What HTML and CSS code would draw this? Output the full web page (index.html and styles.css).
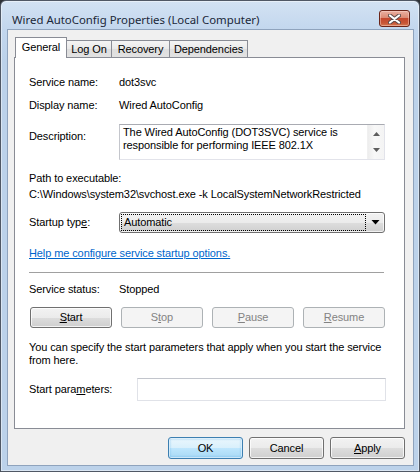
FILE: index.html
```html
<!DOCTYPE html>
<html>
<head>
<meta charset="utf-8">
<link rel="stylesheet" href="styles.css">
</head>
<body>
<div class="window">
  <div class="titlebar">
    <span class="title">Wired AutoConfig Properties (Local Computer)</span>
    <div class="close">
      <svg width="13" height="10" viewBox="0 0 13 10"><path d="M2 1.5 L11 8.5 M11 1.5 L2 8.5" stroke="#5b4a4a" stroke-width="4" stroke-linecap="round"/><path d="M2 1.5 L11 8.5 M11 1.5 L2 8.5" stroke="#ffffff" stroke-width="2.2" stroke-linecap="round"/></svg>
    </div>
  </div>
  <div class="client">
    <div class="tabs">
      <div class="tab active tab-general">General</div>
      <div class="tab tab-logon">Log On</div>
      <div class="tab tab-recovery">Recovery</div>
      <div class="tab tab-deps">Dependencies</div>
    </div>
    <div class="panel">
      <div class="row r1"><span class="label">Service name:</span><span class="value">dot3svc</span></div>
      <div class="row r2"><span class="label">Display name:</span><span class="value">Wired AutoConfig</span></div>
      <div class="row r3">
        <span class="label desc-label">Description:</span>
        <div class="desc">
          <div class="desc-text">The Wired AutoConfig (DOT3SVC) service is<br>responsible for performing IEEE 802.1X</div>
          <div class="vscroll">
            <svg width="7" height="4" viewBox="0 0 7 4"><path d="M3.5 0 L7 4 L0 4 Z" fill="#5e5e5e"/></svg>
            <svg width="7" height="4" viewBox="0 0 7 4"><path d="M0 0 L7 0 L3.5 4 Z" fill="#5e5e5e"/></svg>
          </div>
        </div>
      </div>
      <div class="line path-label">Path to executable:</div>
      <div class="line path-value">C:\Windows\system32\svchost.exe -k LocalSystemNetworkRestricted</div>
      <div class="row startup">
        <span class="label">Startup typ<u>e</u>:</span>
        <div class="combo">
          <span class="combo-focus">Automatic</span>
          <svg width="9" height="5" viewBox="0 0 9 5"><path d="M0.5 0 L8.5 0 L4.5 4.5 Z" fill="#000"/></svg>
        </div>
      </div>
      <div class="line link-line"><span class="link">Help me configure service startup options.</span></div>
      <div class="sep"></div>
      <div class="row status"><span class="label">Service status:</span><span class="value">Stopped</span></div>
      <div class="svc-buttons">
        <div class="btn"><u>S</u>tart</div>
        <div class="btn disabled">S<u>t</u>op</div>
        <div class="btn disabled"><u>P</u>ause</div>
        <div class="btn disabled"><u>R</u>esume</div>
      </div>
      <div class="para">You can specify the start parameters that apply when you start the service<br>from here.</div>
      <div class="row params">
        <span class="label params-label">Start para<u>m</u>eters:</span>
        <div class="input"></div>
      </div>
    </div>
    <div class="actions">
      <div class="btn dlg default">OK</div>
      <div class="btn dlg">Cancel</div>
      <div class="btn dlg"><u>A</u>pply</div>
    </div>
  </div>
</div>
</body>
</html>
```
FILE: styles.css
```css
html, body {
  margin: 0;
  padding: 0;
  background: #2e3136;
}
body {
  width: 420px;
  height: 472px;
  overflow: hidden;
  font-family: "Liberation Sans", Arial, sans-serif;
  font-size: 11px;
  letter-spacing: -0.1px;
  color: #000;
}
u { text-decoration: underline; text-underline-offset: 1px; }

.window {
  box-sizing: border-box;
  width: 420px;
  height: 472px;
  border: 1px solid #505865;
  border-radius: 6px 6px 0 0;
  background: linear-gradient(#d3e2f3 0px, #c3d7ee 28px, #bcd2ea 60px, #bcd2ea 100%);
  box-shadow: inset 0 0 0 1px rgba(255,255,255,0.45);
  display: flex;
  flex-direction: column;
}

.titlebar {
  height: 28px;
  display: flex;
  align-items: flex-start;
  padding-left: 11px;
  flex: none;
}
.title {
  font-family: "Noto Sans", "Open Sans", sans-serif;
  font-size: 11.4px;
  letter-spacing: 0;
  line-height: 16px;
  margin-top: 11px;
  color: #1b2738;
  flex: 1;
  white-space: nowrap;
}
.close {
  box-sizing: border-box;
  width: 31px;
  height: 17px;
  margin-top: 9px;
  margin-right: 9px;
  border: 1px solid #6b2418;
  border-radius: 3px;
  background: linear-gradient(#eab0a2 0%, #dc8a74 45%, #c5482e 50%, #c75535 80%, #d77a52 100%);
  box-shadow: inset 0 0 0 1px rgba(255,220,210,0.45);
  display: flex;
  align-items: center;
  justify-content: center;
}

.client {
  box-sizing: border-box;
  flex: 1;
  margin: 0 5px 5px 6px;
  border: 1px solid #8fa3bd;
  background: #f0f0f0;
  padding: 7px 8px 0 6px;
  display: flex;
  flex-direction: column;
}

.tabs {
  display: flex;
  align-items: flex-end;
  height: 20px;
  padding-left: 1px;
  flex: none;
}
.tab {
  box-sizing: border-box;
  height: 17px;
  border: 1px solid #898c95;
  border-bottom: none;
  border-left: none;
  background: linear-gradient(#f4f4f4, #e9e9e9 50%, #dedede 51%, #e2e2e2);
  text-align: center;
  line-height: 16px;
}
.tab.active {
  height: 21px;
  margin-bottom: -1px;
  background: #fff;
  border-left: 1px solid #898c95;
  position: relative;
  z-index: 1;
  line-height: 18px;
}
.tab-general { width: 52px; }
.tab-logon { width: 45px; }
.tab-recovery { width: 58px; }
.tab-deps { width: 78px; }

.panel {
  box-sizing: border-box;
  height: 372px;
  flex: none;
  border: 1px solid #898c95;
  background: #fff;
  padding: 18px 19px 0 14px;
  display: flex;
  flex-direction: column;
}

.row {
  display: flex;
  align-items: flex-start;
  line-height: 13px;
}
.label {
  width: 90px;
  flex: none;
  white-space: nowrap;
}
.value { white-space: nowrap; }
.line { line-height: 13px; white-space: nowrap; }

.r2 { margin-top: 10px; }
.r3 { margin-top: 12px; }
.desc-label { margin-top: 6px; }
.desc {
  box-sizing: border-box;
  flex: 1;
  height: 36px;
  border: 1px solid #e2e3ea;
  border-top-color: #a9abb2;
  border-left-color: #c4c6cc;
  background: #fff;
  display: flex;
}
.desc-text {
  flex: 1;
  padding: 1px 0 0 3px;
  white-space: nowrap;
  overflow: hidden;
}
.vscroll {
  width: 17px;
  flex: none;
  background: linear-gradient(90deg, #ededed, #f8f8f8 40%, #f4f4f4);
  border-left: 1px solid #f0f0f0;
  display: flex;
  flex-direction: column;
  align-items: center;
  justify-content: space-between;
  padding: 7px 0 7px;
  box-sizing: border-box;
}

.path-label { margin-top: 12px; }
.path-value { margin-top: 3px; }

.startup { margin-top: 11px; align-items: center; }
.combo {
  box-sizing: border-box;
  flex: 1;
  height: 21px;
  border: 1px solid #707070;
  border-radius: 3px;
  background: linear-gradient(#f2f2f2 0%, #ebebeb 50%, #dddddd 51%, #cfcfcf 100%);
  box-shadow: inset 0 0 0 1px rgba(255,255,255,0.7);
  display: flex;
  align-items: center;
  padding: 0 4px 0 2px;
}
.combo-focus {
  flex: 1;
  height: 15px;
  line-height: 15px;
  padding-left: 2px;
  margin-right: 6px;
  outline: 1px dotted #000;
  outline-offset: 0;
}

.link-line { margin-top: 14px; }
.link { color: #0066cc; text-decoration: underline; }

.sep {
  height: 1px;
  margin-top: 12px;
  background: #a0a0a0;
  margin-right: 1px;
}

.status { margin-top: 10px; }

.svc-buttons {
  margin-top: 11px;
  margin-left: 1px;
  display: flex;
  gap: 9px;
}
.btn {
  box-sizing: border-box;
  height: 21px;
  flex: 1;
  border: 1px solid #707070;
  border-radius: 3px;
  background: linear-gradient(#f2f2f2 0%, #ebebeb 50%, #dddddd 51%, #cfcfcf 100%);
  box-shadow: inset 0 0 0 1px rgba(255,255,255,0.75);
  text-align: center;
  line-height: 19px;
}
.btn.disabled {
  border-color: #adb2b5;
  background: #f4f4f4;
  box-shadow: none;
  color: #838383;
}

.para {
  margin-top: 13px;
  line-height: 13px;
  white-space: nowrap;
}

.params { margin-top: 11px; align-items: center; }
.params-label { width: 108px; }
.input {
  box-sizing: border-box;
  flex: 1;
  height: 23px;
  margin-right: -1px;
  border: 1px solid #e0e2e8;
  border-top-color: #c2c5cc;
  background: #fff;
}

.actions {
  margin-top: 8px;
  display: flex;
  justify-content: flex-end;
  gap: 6px;
}
.btn.dlg {
  flex: none;
  width: 75px;
  height: 22px;
  line-height: 20px;
}
.btn.default {
  border-color: #3c7fb1;
  background: linear-gradient(#eaf6fd 0%, #d9f0fc 50%, #bee6fd 51%, #a7d9f5 100%);
  box-shadow: inset 0 0 0 1px rgba(255,255,255,0.6), inset 0 0 2px 1px rgba(60,160,230,0.5);
}
```
